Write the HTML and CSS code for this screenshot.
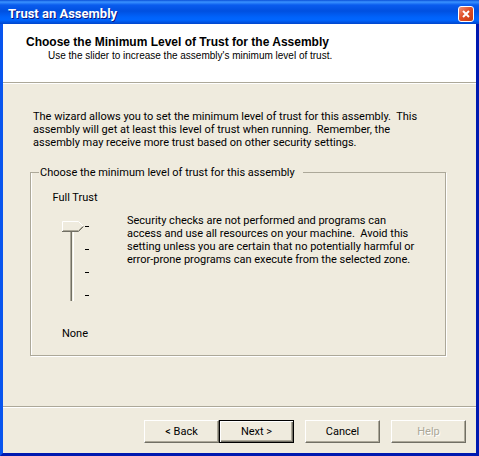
FILE: index.html
```html
<!DOCTYPE html>
<html lang="en">
<head>
  <meta charset="UTF-8">
  <title>Trust an Assembly</title>
  <link rel="stylesheet" href="styles.css">
</head>
<body>
  <div class="window">
    <div class="titlebar">
      <span class="title">Trust an Assembly</span>
      <button type="button" class="close" aria-label="Close">
        <svg width="8" height="8" viewBox="0 0 8 8"><path d="M1 1l6 6M7 1l-6 6" stroke="#fff" stroke-width="2"/></svg>
      </button>
    </div>

    <header class="header">
      <h1>Choose the Minimum Level of Trust for the Assembly</h1>
      <p>Use the slider to increase the assembly's minimum level of trust.</p>
    </header>

    <main class="content">
      <p class="intro">The wizard allows you to set the minimum level of trust for this assembly.&nbsp; This<br>
        assembly will get at least this level of trust when running.&nbsp; Remember, the<br>
        assembly may receive more trust based on other security settings.</p>

      <fieldset class="group">
        <legend>Choose the minimum level of trust for this assembly</legend>
        <div class="trust">
          <div class="level">
            <label for="level">Full Trust</label>
            <div class="slider">
              <input type="range" id="level" min="0" max="3" value="3">
              <!-- one mark per trust level -->
              <div class="ticks"><i></i><i></i><i></i><i></i></div>
            </div>
            <span>None</span>
          </div>
          <p class="description">Security checks are not performed and programs can<br>
            access and use all resources on your machine.&nbsp; Avoid this<br>
            setting unless you are certain that no potentially harmful or<br>
            error-prone programs can execute from the selected zone.</p>
        </div>
      </fieldset>
    </main>

    <footer class="footer">
      <div class="steps">
        <button type="button" class="btn">&lt; Back</button>
        <button type="button" class="btn default">Next &gt;</button>
      </div>
      <button type="button" class="btn">Cancel</button>
      <button type="button" class="btn" disabled>Help</button>
    </footer>
  </div>
</body>
</html>
```
FILE: styles.css
```css
* {
  box-sizing: border-box;
}
body {
  margin: 0;
  background: #efebde;
  color: #000;
  font-family: Roboto, "Liberation Sans", sans-serif;
  font-size: 11px;
  line-height: 13px;
}
h1, p {
  margin: 0;
}
.window {
  display: flex;
  flex-direction: column;
  min-height: 100vh;
  border: solid;
  border-width: 0 3px 3px;
  border-color: #0831d9 #0019b0 #0019b0 #0855ee;
}

/* Title bar */
.titlebar {
  display: flex;
  align-items: center;
  justify-content: space-between;
  height: 24px;
  margin: 0 -3px;
  padding: 3px 5px 0 8px;
  background: linear-gradient(#0a50d8 0, #3a93ff 2px, #0a5cee 5px, #0050e0 11px, #0062fa 17px, #0066ff 20px, #0045cc 24px);
}
.title {
  color: #fff;
  font-size: 13px;
  font-weight: bold;
  text-shadow: 1px 1px #0a1883;
}
.close {
  display: flex;
  align-items: center;
  justify-content: center;
  width: 16px;
  height: 16px;
  padding: 0;
  border: 1px solid #fff;
  border-radius: 3px;
  background: linear-gradient(135deg, #f0937c, #e04f28 45%, #c63a10);
}

/* White wizard header */
.header {
  height: 59px;
  padding: 12px 23px 0;
  border-bottom: 1px solid #aca899;
  background: #fff;
  font-family: "Liberation Sans", Arial, sans-serif;
}
.header h1 {
  font-size: 12px;
  line-height: 13px;
}
.header p {
  padding-left: 22px;
  font-size: 10px;
}

.content {
  flex: 1;
  padding: 26px 30px 48px 27px;
  border-top: 1px solid #fff;
}
.intro {
  padding-left: 3px;
}
.group {
  margin: 17px 0 0;
  padding: 0;
  border: 1px solid #aca899;
  box-shadow: 1px 1px #fff, inset 1px 0 #fff;
}
.group legend {
  margin-left: 8px;
  padding: 0 8px 0 1px;
  background: #efebde;
}

/* Slider column */
.trust {
  display: flex;
  padding: 12px 0 15px 14px;
}
.level {
  display: flex;
  flex-direction: column;
  align-items: center;
  flex: none;
  width: 60px;
}
.slider {
  display: flex;
  margin: 17px 0 26px;
}
.slider input {
  appearance: none;
  writing-mode: vertical-lr;
  direction: rtl;
  width: 22px;
  height: 80px;
  margin: 0;
  background: linear-gradient(90deg, #aca899 1px, #716f64 1px 2px, #f1efe2 2px 3px, #fff 3px) 8px 0 / 4px 80px no-repeat;
}
.slider input::-webkit-slider-thumb {
  appearance: none;
  width: 22px;
  height: 11px;
  background: url("data:image/svg+xml,%3Csvg xmlns='http://www.w3.org/2000/svg' width='22' height='11'%3E%3Cpath d='M0 0h17l5 5-5 6H0z' fill='%23efebde'/%3E%3Cpath d='M.5 10V.5H16.5l5 5' fill='none' stroke='%23fff'/%3E%3Cpath d='M1 9.5h15.500l4-4' fill='none' stroke='%23aca899'/%3E%3Cpath d='M0 10.500h16.500l5-5' fill='none' stroke='%23716f64'/%3E%3C/svg%3E");
}
.ticks {
  display: flex;
  flex-direction: column;
  gap: 22px;
  padding: 5px 0 0 1px;
}
.ticks i {
  width: 4px;
  height: 1px;
  background: #000;
}
.description {
  padding: 23px 0 0 22px;
}

/* Buttons */
.footer {
  display: flex;
  justify-content: flex-end;
  gap: 11px;
  padding: 13px 10px 10px;
  border-top: 1px solid #aca899;
  box-shadow: inset 0 1px #fff;
}
.steps {
  display: flex;
}
.btn {
  width: 75px;
  height: 23px;
  padding: 0;
  border: 1px solid;
  border-color: #fff #716f64 #716f64 #fff;
  background: #efebde;
  box-shadow: inset -1px -1px #aca899;
  color: #000;
  font: inherit;
}
.btn.default {
  border-color: #000;
  box-shadow: inset 1px 1px #fff, inset -1px -1px #716f64, inset -2px -2px #aca899;
}
.btn:disabled {
  color: #aca899;
  text-shadow: 1px 1px #fff;
}
```
